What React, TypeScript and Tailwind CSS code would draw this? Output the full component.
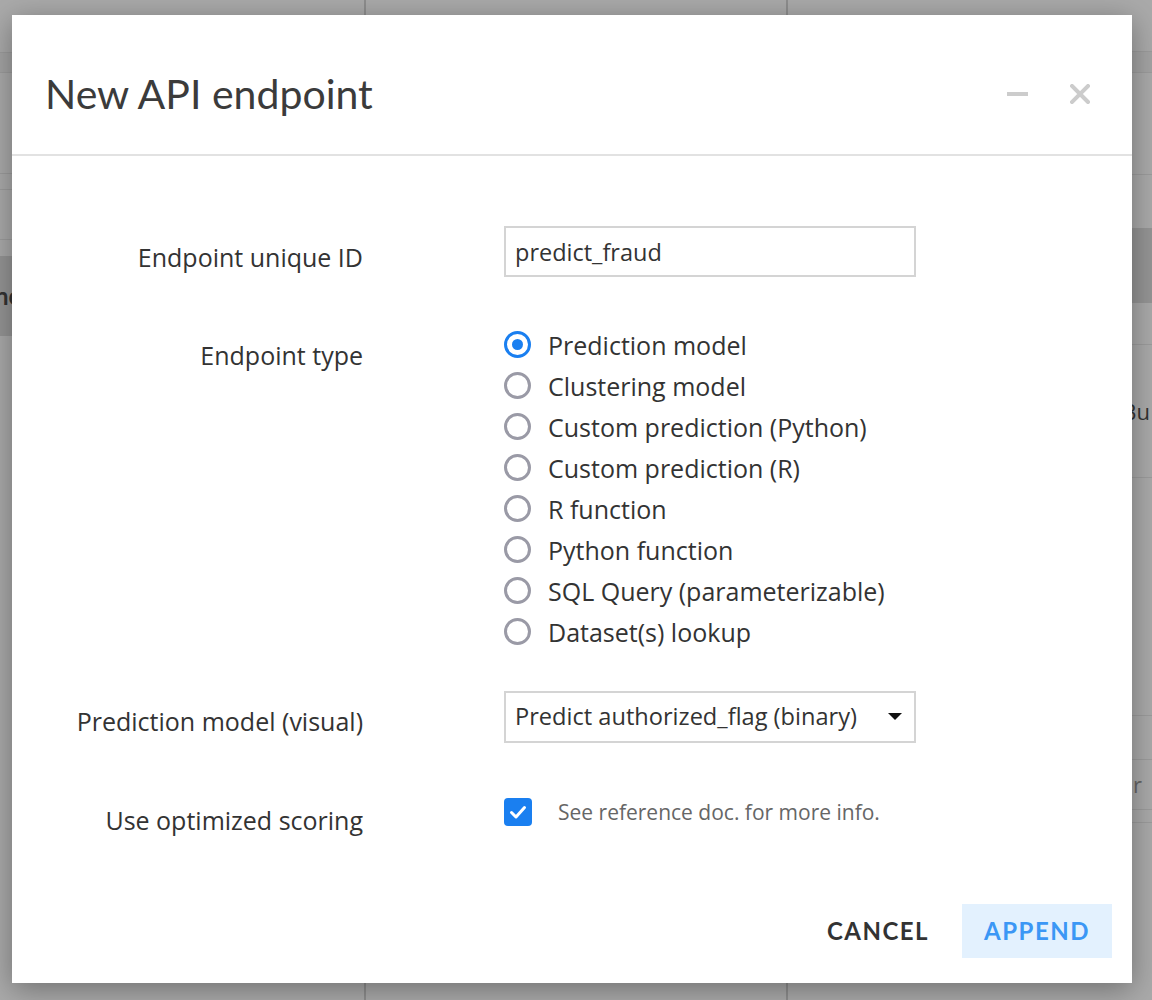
import { useState } from 'react'

const body = { fontFamily: '"Open Sans", Lato, sans-serif' }
const heading = { fontFamily: 'Lato, "Open Sans", sans-serif' }

const TYPES = [
  'Prediction model',
  'Clustering model',
  'Custom prediction (Python)',
  'Custom prediction (R)',
  'R function',
  'Python function',
  'SQL Query (parameterizable)',
  'Dataset(s) lookup',
]

function Radio({ checked }: { checked: boolean }) {
  return checked ? (
    <span className="flex h-[27px] w-[27px] shrink-0 items-center justify-center rounded-full border-[3px] border-[#1a7ff0]">
      <span className="h-[11px] w-[11px] rounded-full bg-[#1a7ff0]" />
    </span>
  ) : (
    <span className="h-[27px] w-[27px] shrink-0 rounded-full border-[3px] border-[#9a9aa6]" />
  )
}

function Background() {
  return (
    <div className="flex h-full w-full text-[#333]">
      {/* left panel */}
      <div className="w-[366px] border-r-2 border-[#8e8e8e]">
        <div className="h-[53px] border-b border-[#9c9c9c]" />
        <div className="h-[20px] border-b border-[#9c9c9c] bg-[#a4a4a4]" />
        <div className="h-[101px] border-b border-[#9c9c9c]" />
        <div className="h-[16px] border-b border-[#9c9c9c]" />
        <div className="h-[50px] border-b border-[#9c9c9c]" />
        <div className="h-[16px]" />
        <div className="flex h-[80px] items-center bg-[#959595] text-[24px] font-bold" style={heading}>
          <span className="-ml-[5px]">nc</span>
        </div>
      </div>
      <div className="w-[422px] border-r-2 border-[#8e8e8e]" />
      {/* right panel */}
      <div className="flex-1">
        <div className="h-[52px] border-b border-[#9c9c9c]" />
        <div className="h-[21px] border-b border-[#9c9c9c] bg-[#a4a4a4]" />
        <div className="h-[102px] border-b border-[#9c9c9c]" />
        <div className="h-[53px]" />
        <div className="h-[75px] bg-[#959595]" />
        <div className="h-[42px] border-b border-[#9c9c9c]" />
        <div className="flex h-[133px] items-center justify-end border-b border-[#9c9c9c] pr-[2px] text-[22px]">
          Bu
        </div>
        <div className="h-[238px] border-b border-[#9c9c9c]" />
        <div className="h-[44px] border-b border-[#9c9c9c]" />
        <div className="flex h-[50px] items-center justify-end border-b border-[#9c9c9c] pr-[10px] text-[22px] text-[#666]">
          r
        </div>
        <div className="h-[13px] border-b border-[#9c9c9c]" />
      </div>
    </div>
  )
}

export default function App() {
  const [type, setType] = useState(0)
  const [optimized, setOptimized] = useState(true)

  return (
    <div className="relative h-[1000px] w-[1152px] overflow-hidden bg-[#aaaaaa]" style={body}>
      <Background />

      {/* Dialog */}
      <div className="absolute left-[12px] top-[15px] flex h-[968px] w-[1120px] flex-col bg-white shadow-[0_6px_28px_rgba(0,0,0,0.35)]">
        <div className="flex h-[141px] shrink-0 items-center border-b-2 border-[#e2e2e2] pl-[33px] pr-[42px] pt-[18px]">
          <h1 className="flex-1 text-[41px] leading-none text-[#3b3b3b]" style={heading}>
            New API endpoint
          </h1>
          <button className="mr-[42px] h-[4px] w-[21px] bg-[#cccccc]" />
          <button className="h-[20px] w-[20px]">
            <svg viewBox="0 0 20 20" className="h-[20px] w-[20px]">
              <path d="M2 2L18 18M18 2L2 18" stroke="#cccccc" strokeWidth="4" strokeLinecap="square" />
            </svg>
          </button>
        </div>

        <div className="flex-1 pt-[70px] text-[25px] text-[#333]">
          {/* ID */}
          <div className="flex">
            <label className="w-[351px] pt-[16px] text-right leading-[30px]">Endpoint unique ID</label>
            <div className="ml-[141px]">
              <input
                defaultValue="predict_fraud"
                className="h-[51px] w-[412px] border-2 border-[#d4d4d4] px-[9px] text-[23.5px] text-[#333] outline-none"
              />
            </div>
          </div>

          {/* Type */}
          <div className="mt-[47px] flex">
            <label className="w-[351px] pt-[16px] text-right leading-[30px]">Endpoint type</label>
            <div className="ml-[141px] flex flex-col">
              {TYPES.map((t, i) => (
                <button
                  key={t}
                  onClick={() => setType(i)}
                  className="flex h-[41px] items-center gap-[17px] text-left leading-[30px]"
                >
                  <Radio checked={type === i} />
                  <span>{t}</span>
                </button>
              ))}
            </div>
          </div>

          {/* Model */}
          <div className="mt-[39px] flex">
            <label className="w-[351px] pt-[15px] text-right leading-[30px]">Prediction model (visual)</label>
            <div className="ml-[141px]">
              <div className="flex h-[52px] w-[412px] items-center border-2 border-[#d4d4d4] pl-[9px] pr-[12px] text-[23.6px]">
                <span className="flex-1">Predict authorized_flag (binary)</span>
                <svg viewBox="0 0 14 8" className="h-[8px] w-[14px]">
                  <path d="M0 0H14L7 7Z" fill="#111" />
                </svg>
              </div>
            </div>
          </div>

          {/* Optimized */}
          <div className="mt-[46px] flex items-start">
            <label className="w-[351px] pt-[16px] text-right leading-[30px]">Use optimized scoring</label>
            <div className="ml-[141px] mt-[9px] flex items-center gap-[26px]">
              <button
                onClick={() => setOptimized(!optimized)}
                className={`flex h-[28px] w-[28px] items-center justify-center rounded-[4px] ${
                  optimized ? 'bg-[#1a7ff0]' : 'border-2 border-[#9a9aa6] bg-white'
                }`}
              >
                {optimized && (
                  <svg viewBox="0 0 20 20" className="h-[20px] w-[20px]">
                    <path d="M3.5 10.5L8 15L16.5 5.5" fill="none" stroke="white" strokeWidth="3" strokeLinecap="round" strokeLinejoin="round" />
                  </svg>
                )}
              </button>
              <span className="text-[21px] leading-[28px] text-[#666]">See reference doc. for more info.</span>
            </div>
          </div>
        </div>

        <div className="flex shrink-0 items-center justify-end gap-[11px] pb-[25px] pr-[20px]" style={heading}>
          <button className="h-[54px] px-[22px] text-[24px] font-bold tracking-[1.5px] text-[#333]">CANCEL</button>
          <button className="h-[54px] bg-[#e3f1fe] px-[22px] text-[24px] font-bold tracking-[1.5px] text-[#3b97f5]">APPEND</button>
        </div>
      </div>
    </div>
  )
}
